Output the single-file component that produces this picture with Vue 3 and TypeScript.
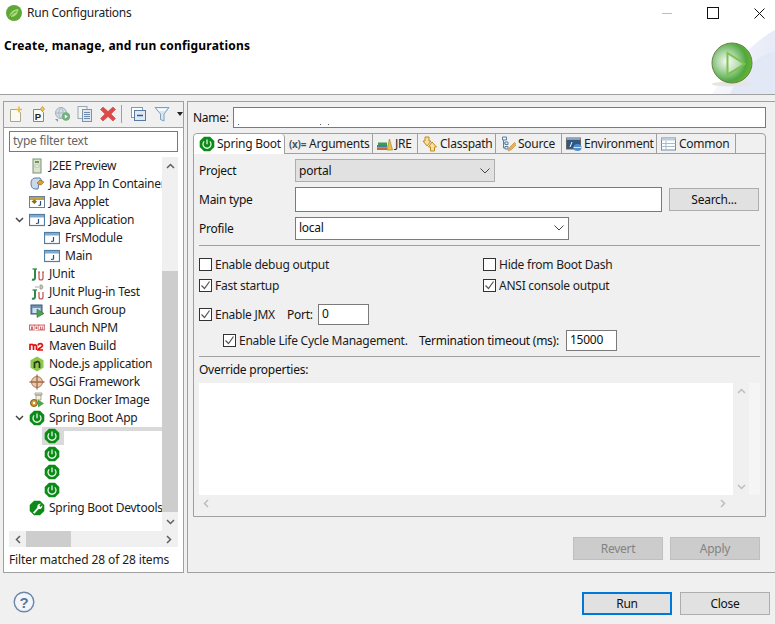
<script setup lang="ts">
const icons: Record<string, string> = {
  spring: '<path d="M5 .7h6L15.3 5v6L11 15.3H5L.7 11V5z" fill="#0b8a17"/><path d="M5.200 5.400a4 4 0 1 0 5.600 0" fill="none" stroke="#e8f5e8" stroke-width="1.300"/><path d="M8 3.600v4.600" stroke="#e8f5e8" stroke-width="1.300"/>',
  wrench: '<path d="M5 .7h6L15.3 5v6L11 15.3H5L.7 11V5z" fill="#0b8a17"/><path d="M4 12.500l4.400-5a3 3 0 0 1 3.600-3.700l-1.700 1.800 1.400 1.300 1.600-1.600a3 3 0 0 1-3.700 3.600l-4.200 4.800z" fill="#fff"/>',
  preview: '<rect x="4" y="1" width="8" height="14" fill="#d8e4cc" stroke="#7f8f7a"/><rect x="6" y="3" width="4" height="2" fill="#6a9a4a"/><rect x="6" y="7" width="4" height="2" fill="#fff" stroke="#999" stroke-width=".5"/>',
  container: '<path d="M6 2h5l2 3-3 2-1 6H6c-3 0-4-3-4-5.500S3 2 6 2z" fill="#c9d8ea" stroke="#5a7ba8"/><path d="M8 7l3-3 4 2-3 3-2-.500z" fill="#e0a030" stroke="#8a6010" stroke-width=".6"/>',
  applet: '<rect x=".5" y="2.500" width="15" height="11" fill="#fff" stroke="#6b7f95"/><rect x="1" y="3" width="14" height="3" fill="#c7a13d"/><path d="M2.500 7.500l3-2 2.500 2-2.500 2.500z" fill="#8f6d1d"/><path d="M11.500 7v4l-2 .5" fill="none" stroke="#2a4f7c" stroke-width="1.200"/>',
  java: '<rect x=".5" y="2.500" width="15" height="11" fill="#fff" stroke="#4f7da6" stroke-width="1.200"/><rect x="1" y="3" width="14" height="2.500" fill="#7fa9cf"/><path d="M9.500 7v4l-2.500.5" fill="none" stroke="#2a4f7c" stroke-width="1.200"/>',
  junit: '<path d="M6 3v9c0 1.500-1.500 2-3 1.500" fill="none" stroke="#2f8a4a" stroke-width="2"/><path d="M3.500 3H8" stroke="#2f8a4a" stroke-width="1.300"/><path d="M10 6v6a2 2 0 0 0 4 0V6M9 6h2M13 6h2" fill="none" stroke="#c0504d" stroke-width="1.200"/>',
  plugin: '<path d="M6 6v7c0 1.500-1.500 2-3 1.500" fill="none" stroke="#2f8a4a" stroke-width="2"/><path d="M3.500 6H8" stroke="#2f8a4a" stroke-width="1.300"/><path d="M10 8v5a2 2 0 0 0 4 0V8" fill="none" stroke="#c0504d" stroke-width="1.200"/><path d="M6 3h4M11 1h2l1 2-1 2h-2z" fill="#e7c66a" stroke="#8797a8" stroke-width=".8"/>',
  group: '<rect x="2" y="3" width="11" height="9" fill="#6f93b7" stroke="#39587a"/><rect x="3.500" y="6" width="8" height="5" fill="#cfe0f0"/><path d="M8 7l7 4.500-7 4z" fill="#4ea24e" stroke="#2b7a2b" stroke-width=".6"/>',
  npm: '<rect y="4.500" width="16" height="6" fill="#cf6d6d"/><path d="M1.500 9.500V6h3v3.500M6 11V6h3v3.500H6M10.500 9.500V6h4.200v3.500M12.600 6v3" fill="none" stroke="#fff" stroke-width=".9"/>',
  maven: '<path d="M1 12V6.500h1.500a1.600 1.600 0 0 1 2 1.500V12M4.500 8a1.600 1.600 0 0 1 3 0v4" fill="none" stroke="#e01010" stroke-width="1.700"/><path d="M9 7.500a2.300 2.300 0 0 1 4.500 0c0 2-4 2.500-4.500 4.500h5" fill="none" stroke="#e01010" stroke-width="1.700"/>',
  node: '<path d="M8 .5l6.500 3.700v7.600L8 15.500l-6.500-3.700V4.200z" fill="#8cc84b"/><path d="M5.500 12V6.500h1.300a2 2 0 0 1 3.700 1V12" fill="none" stroke="#2a3a18" stroke-width="1.700"/>',
  osgi: '<circle cx="8" cy="8" r="5.500" fill="#e8c9a8" stroke="#a87a5a"/><path d="M8 .5v15M.5 8h15" stroke="#a06a4a" stroke-width="1.300"/>',
  docker: '<path d="M6 1h7v2H6zM7 3h5v5H7z" fill="#f4efd8" stroke="#8a8a7a" stroke-width=".7"/><circle cx="5" cy="11" r="3.500" fill="#d69a34" stroke="#7d5a1a"/><circle cx="5" cy="11" r="1.200" fill="#fff"/><path d="M9 7.500l6 4-6 4z" fill="#4da64d"/>',
  new: '<path d="M2.500 3.500h7l3 3v9h-10z" fill="#fbfaf0" stroke="#a8a890"/><path d="M11 .5v6M8 3.500h6" stroke="#e9b93d" stroke-width="1.500"/>',
  proto: '<path d="M2.500 3.500h7l3 3v9h-10z" fill="#fbfaf0" stroke="#88887a"/><text x="3.700" y="14" font-size="9.500" font-weight="700" font-family="Liberation Sans" fill="#222">P</text><path d="M11.500 .5l2 2.500-2 2.500-2-2.500z" fill="#f0d060" stroke="#b08a20" stroke-width=".7"/>',
  export: '<circle cx="7" cy="7" r="5.500" fill="#d5dde6" stroke="#a5b0bc"/><path d="M2 7h10M7 1.500c-3 3-3 8 0 11M7 1.500c3 3 3 8 0 11" fill="none" stroke="#9daab8" stroke-width=".7"/><circle cx="12" cy="10.500" r="4.200" fill="#6fb37a"/><path d="M10.800 8.500l3 2-3 2z" fill="#fff"/><path d="M1 13l3 3v-3z" fill="#7f97b3"/>',
  copy: '<rect x="1" y=".5" width="9" height="12" fill="#f4f4ea" stroke="#9ba7b5"/><rect x="5.500" y="3.500" width="9" height="12" fill="#dfe8f2" stroke="#7b94b0"/><path d="M7 6.500h6M7 8.500h6M7 10.500h6M7 12.500h6" stroke="#6e8cab"/>',
  del: '<path d="M3 1l5 4.500L13 1l2.500 2.500L11 8l4.500 4.500L13 15l-5-4.500L3 15 .5 12.500 5 8 .5 3.500z" fill="#de4a48" stroke="#c53a3a" stroke-width=".5"/>',
  collapse: '<rect x=".5" y="1.500" width="11" height="10" fill="#fff" stroke="#7e9bbb"/><rect x="3.500" y="4.500" width="11" height="10" fill="#dfe9f4" stroke="#557ba3"/><path d="M6 9.500h6" stroke="#2f5d90" stroke-width="1.500"/>',
  filter: '<path d="M1 1.500h14L10 8v7l-3.500-1.500V8z" fill="#d6e6f2" stroke="#80a0b8"/><path d="M3 2.500h10l-2.200 2.500H5z" fill="#f4fafd"/>',
  jre: '<rect x="0" y="9" width="10" height="2.500" fill="#3f7fa8"/><rect x="0" y="11.500" width="10" height="2.500" fill="#c96a32"/><rect x="1" y="6.500" width="9" height="2.500" fill="#3f9a55"/><path d="M10 14l2.500-11 3 11z" fill="#e6c64a" stroke="#a5861d" stroke-width=".7"/>',
  cp: '<path d="M3 1h4v4h2L5 10 1 5h2zM10 6l4.500 5H12.500v4h-4v-4H6.500z" fill="#f8df9e" stroke="#c08a20"/>',
  source: '<path d="M2.500 1h4v3h-4zM5 6h3v2.500H5zM5 10.500h3V13H5zM3.500 4v8H5M3.500 7H5" fill="none" stroke="#5a7fa5"/><path d="M8 15l1.500-3.500 5-5 2 2-5 5z" fill="#f0b050" stroke="#b8862c" stroke-width=".6"/>',
  env: '<rect x=".5" y="2" width="14" height="11" fill="#31577f" stroke="#666"/><rect x=".5" y="2" width="14" height="2" fill="#8aa2bd"/><path d="M4 11l2-5" stroke="#fff"/><ellipse cx="11.500" cy="11.500" rx="4" ry="3.500" fill="#4f8fcf"/><path d="M7.500 11.500h8" stroke="#d0e4f7"/>',
  common: '<rect x=".5" y="2" width="14" height="12" fill="#fff" stroke="#6f8aa7"/><rect x=".5" y="2" width="14" height="2.500" fill="#b9cde0"/><path d="M.5 7.500h14M.5 10.500h14M5 4.500V14" stroke="#a8bccf"/>',
}

interface Row { label?: string; icon: string; level: number; expanded?: boolean; selected?: boolean }
const rows: Row[] = [
  { label: 'J2EE Preview', icon: 'preview', level: 1 },
  { label: 'Java App In Container', icon: 'container', level: 1 },
  { label: 'Java Applet', icon: 'applet', level: 1 },
  { label: 'Java Application', icon: 'java', level: 1, expanded: true },
  { label: 'FrsModule', icon: 'java', level: 2 },
  { label: 'Main', icon: 'java', level: 2 },
  { label: 'JUnit', icon: 'junit', level: 1 },
  { label: 'JUnit Plug-in Test', icon: 'plugin', level: 1 },
  { label: 'Launch Group', icon: 'group', level: 1 },
  { label: 'Launch NPM', icon: 'npm', level: 1 },
  { label: 'Maven Build', icon: 'maven', level: 1 },
  { label: 'Node.js application', icon: 'node', level: 1 },
  { label: 'OSGi Framework', icon: 'osgi', level: 1 },
  { label: 'Run Docker Image', icon: 'docker', level: 1 },
  { label: 'Spring Boot App', icon: 'spring', level: 1, expanded: true },
  { icon: 'spring', level: 2, selected: true },
  { icon: 'spring', level: 2 },
  { icon: 'spring', level: 2 },
  { icon: 'spring', level: 2 },
  { label: 'Spring Boot Devtools Client', icon: 'wrench', level: 1 },
]

const tools = ['new', 'proto', 'export', 'copy', 'del']
const tabs = [
  { label: 'Spring Boot', icon: 'spring', w: 91, active: true },
  { label: 'Arguments', icon: '', w: 88 },
  { label: 'JRE', icon: 'jre', w: 45 },
  { label: 'Classpath', icon: 'cp', w: 78 },
  { label: 'Source', icon: 'source', w: 66 },
  { label: 'Environment', icon: 'env', w: 95 },
  { label: 'Common', icon: 'common', w: 79 },
]
</script>

<template>
  <div class="window">
    <header class="titlebar">
      <svg class="app-icon" width="16" height="16" viewBox="0 0 16 16">
        <circle cx="8" cy="8" r="8" fill="#5fa836" />
        <path d="M3.500 12c0-5 4-7.500 9-8-.5 5-3.500 8-7.500 8z" fill="#a9dc7a" />
        <path d="M4 12.500c1-3 3.500-5 6.500-6" stroke="#4e9a2c" fill="none" />
      </svg>
      <span class="title">Run Configurations</span>
      <div class="win-ctrls">
        <span class="wc"><i class="wc-min"></i></span>
        <span class="wc"><i class="wc-max"></i></span>
        <span class="wc">
          <svg width="11" height="11" viewBox="0 0 11 11"><path d="M.5.500l10 10M10.500.500l-10 10" stroke="#111" /></svg>
        </span>
      </div>
    </header>

    <section class="banner">
      <h1>Create, manage, and run configurations</h1>
      <svg class="banner-art" width="75" height="66" viewBox="0 0 75 66">
        <defs>
          <radialGradient id="ball" cx=".36" cy=".46" r=".62">
            <stop offset="0" stop-color="#f6faf4" />
            <stop offset=".4" stop-color="#a8d4a2" />
            <stop offset=".8" stop-color="#4fa83f" />
            <stop offset="1" stop-color="#62b52e" />
          </radialGradient>
          <linearGradient id="wash" x1="0" y1="0" x2="1" y2="0">
            <stop offset="0" stop-color="#f7f8fd" />
            <stop offset="1" stop-color="#e6ebf7" />
          </linearGradient>
        </defs>
        <path d="M12 66C28 42 52 14 75 2v64z" fill="url(#wash)" />
        <path d="M30 66C42 42 58 26 75 24v42z" fill="#e2e8f6" />
        <ellipse cx="32" cy="56" rx="20" ry="2.500" fill="#e4e6e2" />
        <circle cx="32" cy="35" r="20" fill="url(#ball)" stroke="#6f7f4a" />
        <path d="M27.500 25v21.500l17-10.500z" fill="#ffffff" fill-opacity=".35" stroke="#7cc24c" stroke-width="2" />
      </svg>
    </section>

    <main class="main">
      <aside class="left">
        <div class="toolbar">
          <svg v-for="t in tools" :key="t" class="tool" width="16" height="16" viewBox="0 0 16 16" v-html="icons[t]"></svg>
          <i class="tool-sep"></i>
          <svg class="tool" width="16" height="16" viewBox="0 0 16 16" v-html="icons.collapse"></svg>
          <svg class="tool" width="16" height="16" viewBox="0 0 16 16" v-html="icons.filter"></svg>
          <i class="tool-arrow"></i>
        </div>
        <div class="left-body">
          <div class="filter">type filter text</div>
          <div class="tree-wrap">
            <div class="tree-top">
              <div class="tree">
                <div v-for="(r, i) in rows" :key="i" class="row" :class="'lv' + r.level">
                  <svg v-if="r.expanded" class="twist" width="9" height="6" viewBox="0 0 9 6"><path d="M1 1l3.500 3.500L8 1" fill="none" stroke="#444" stroke-width="1.500" /></svg>
                  <span class="icon-cell" :class="{ sel: r.selected }">
                    <svg width="16" height="16" viewBox="0 0 16 16" v-html="icons[r.icon]"></svg>
                  </span>
                  <span v-if="r.label" class="row-label">{{ r.label }}</span>
                  <span v-else-if="r.selected" class="sel-rest"><i></i></span>
                </div>
              </div>
              <div class="vbar">
                <svg width="9" height="6" viewBox="0 0 9 6"><path d="M1 5l3.500-3.500L8 5" fill="none" stroke="#606060" stroke-width="1.500" /></svg>
                <div class="vtrack"><div class="vthumb"></div></div>
                <svg width="9" height="6" viewBox="0 0 9 6"><path d="M1 1l3.500 3.500L8 1" fill="none" stroke="#606060" stroke-width="1.500" /></svg>
              </div>
            </div>
            <div class="hbar">
              <svg width="6" height="9" viewBox="0 0 6 9"><path d="M5 1L1.500 4.500 5 8" fill="none" stroke="#606060" stroke-width="1.500" /></svg>
              <div class="htrack"><div class="hthumb"></div></div>
              <svg width="6" height="9" viewBox="0 0 6 9"><path d="M1 1l3.500 3.500L1 8" fill="none" stroke="#606060" stroke-width="1.500" /></svg>
            </div>
          </div>
          <div class="status">Filter matched 28 of 28 items</div>
        </div>
      </aside>

      <section class="right">
        <div class="name-row">
          <label>Name:</label>
          <div class="name-input"><i></i><i class="d2"></i><i class="d3"></i></div>
        </div>

        <div class="folder">
          <div class="tabs">
            <div v-for="t in tabs" :key="t.label" class="tab" :class="{ active: t.active }" :style="{ width: t.w + 'px' }">
              <span v-if="!t.icon" class="args">(x)=</span>
              <svg v-else width="16" height="16" viewBox="0 0 16 16" v-html="icons[t.icon]"></svg>
              <span>{{ t.label }}</span>
            </div>
          </div>

          <div class="form">
            <div class="f-row project">
              <label>Project</label>
              <div class="combo ro">
                <span>portal</span>
                <svg width="10" height="6" viewBox="0 0 10 6"><path d="M.5.500L5 5 9.500.500" fill="none" stroke="#444" /></svg>
              </div>
            </div>
            <div class="f-row maintype">
              <label>Main type</label>
              <div class="input grow"></div>
              <button class="btn search">Search...</button>
            </div>
            <div class="f-row profile">
              <label>Profile</label>
              <div class="combo wh">
                <span>local</span>
                <svg width="10" height="6" viewBox="0 0 10 6"><path d="M.5.500L5 5 9.500.500" fill="none" stroke="#444" /></svg>
              </div>
            </div>
            <hr class="sep first" />
            <div class="checks">
              <div class="ck"><i class="box"></i>Enable debug output</div>
              <div class="ck"><i class="box"></i>Hide from Boot Dash</div>
              <div class="ck"><i class="box on"><svg width="11" height="11" viewBox="0 0 11 11"><path d="M1.500 5.500l3 3 5-7" fill="none" stroke="#555" stroke-width="1.200" /></svg></i>Fast startup</div>
              <div class="ck"><i class="box on"><svg width="11" height="11" viewBox="0 0 11 11"><path d="M1.500 5.500l3 3 5-7" fill="none" stroke="#555" stroke-width="1.200" /></svg></i>ANSI console output</div>
            </div>
            <div class="jmx">
              <div class="ck"><i class="box on"><svg width="11" height="11" viewBox="0 0 11 11"><path d="M1.500 5.500l3 3 5-7" fill="none" stroke="#555" stroke-width="1.200" /></svg></i>Enable JMX</div>
              <span class="port-label">Port:</span>
              <div class="input small">0</div>
            </div>
            <div class="life">
              <div class="ck"><i class="box on"><svg width="11" height="11" viewBox="0 0 11 11"><path d="M1.500 5.500l3 3 5-7" fill="none" stroke="#555" stroke-width="1.200" /></svg></i>Enable Life Cycle Management.</div>
              <span class="term-label">Termination timeout (ms):</span>
              <div class="input small">15000</div>
            </div>
            <hr class="sep second" />
            <div class="override-label">Override properties:</div>
            <div class="override">
              <div class="ta-top">
                <div class="ta"></div>
                <div class="ta-v">
                  <svg width="9" height="6" viewBox="0 0 9 6"><path d="M1 5l3.500-3.500L8 5" fill="none" stroke="#bdbdbd" stroke-width="1.500" /></svg>
                  <svg width="9" height="6" viewBox="0 0 9 6"><path d="M1 1l3.500 3.500L8 1" fill="none" stroke="#bdbdbd" stroke-width="1.500" /></svg>
                </div>
                <div class="ta-gap"></div>
              </div>
              <div class="ta-h">
                <svg width="6" height="9" viewBox="0 0 6 9"><path d="M5 1L1.500 4.500 5 8" fill="none" stroke="#bdbdbd" stroke-width="1.500" /></svg>
                <svg width="6" height="9" viewBox="0 0 6 9"><path d="M1 1l3.500 3.500L1 8" fill="none" stroke="#bdbdbd" stroke-width="1.500" /></svg>
              </div>
            </div>
          </div>
        </div>

        <div class="right-actions">
          <button class="btn dis">Revert</button>
          <button class="btn dis">Apply</button>
        </div>
      </section>
    </main>

    <footer class="footer">
      <svg class="help" width="22" height="22" viewBox="0 0 22 22">
        <circle cx="11" cy="11" r="9.800" fill="#f2f5fa" stroke="#6d87a8" stroke-width="1.400" />
        <text x="11" y="16.500" text-anchor="middle" font-size="15" font-weight="700" font-family="Liberation Sans" fill="#5c7697">?</text>
      </svg>
      <div class="foot-btns">
        <button class="btn primary">Run</button>
        <button class="btn">Close</button>
      </div>
    </footer>
  </div>
</template>

<style scoped>
.window {
  width: 775px;
  height: 624px;
  overflow: hidden;
  display: flex;
  flex-direction: column;
  background: #f0f0f0;
  color: #111;
  font-family: "Noto Sans", "Open Sans", sans-serif;
  font-size: 12px;
  line-height: 16px;
  letter-spacing: -0.25px;
}
.titlebar {
  height: 28px;
  flex: none;
  display: flex;
  align-items: center;
  background: #fff;
  padding: 0 0 2px 6px;
  box-sizing: border-box;
}
.app-icon { margin-right: 5px; }
.title { color: #222; }
.win-ctrls { margin-left: auto; margin-right: -7px; display: flex; align-items: center; }
.wc { width: 46px; height: 26px; display: flex; align-items: center; justify-content: center; }
.wc-min { width: 10px; height: 1px; background: #bdbdbd; }
.wc-max { width: 10px; height: 10px; border: 1px solid #111; }
.banner {
  position: relative;
  height: 67px;
  flex: none;
  box-sizing: border-box;
  background: #fff;
  border-bottom: 1px solid #a0a0a0;
  padding: 9px 0 0 4px;
}
.banner h1 { margin: 0; font-size: 12px; line-height: 17px; font-weight: 700; color: #000; letter-spacing: 0.2px; }
.banner-art { position: absolute; right: 0; bottom: 0; }
.main {
  flex: none;
  height: 472px;
  margin-top: 6px;
  padding-left: 3px;
  display: flex;
  gap: 3px;
}
.left {
  width: 181px;
  flex: none;
  box-sizing: border-box;
  border: 1px solid #a0a0a0;
  display: flex;
  flex-direction: column;
}
.toolbar {
  height: 26px;
  flex: none;
  display: flex;
  align-items: center;
  box-sizing: border-box;
  border-bottom: 1px solid #a0a0a0;
  padding: 0 0 2px 4px;
}
.tool { flex: none; margin-right: 7px; }
.tool-sep { width: 1px; height: 18px; background: #a0a0a0; margin: 0 9px 0 -2px; }
.tool-arrow { width: 0; height: 0; border: 3.500px solid transparent; border-top: 4px solid #222; border-bottom: 0; }
.left-body { flex: 1; background: #fff; padding: 3px 5px 0; min-height: 0; display: flex; flex-direction: column; }
.filter {
  height: 21px;
  flex: none;
  box-sizing: border-box;
  border: 1px solid #7a7a7a;
  padding: 1px 3px;
  color: #666;
}
.tree-wrap { margin-top: 5px; flex: none; }
.tree-top { display: flex; height: 374px; }
.tree { width: 153px; flex: none; overflow: hidden; }
.row {
  position: relative;
  height: 18px;
  display: flex;
  align-items: center;
  white-space: nowrap;
  color: #1c1c1c;
}
.lv1 { padding-left: 20px; }
.lv2 { padding-left: 35px; }
.twist { position: absolute; left: 6px; top: 6px; }
.icon-cell { flex: none; width: 16px; height: 16px; margin-right: 4px; }
.lv2 .icon-cell { margin-right: 5px; }
.lv2 .icon-cell.sel {
  background: #d9d9d9;
  height: 18px;
  width: 22px;
  margin: 0 0 0 -2px;
  padding-left: 2px;
  box-sizing: border-box;
  display: flex;
  align-items: center;
}
.sel-rest { flex: 1; height: 18px; background: #fff; }
.sel-rest i { display: block; height: 4px; background: #d9d9d9; }
.row-label { flex: none; }
.vbar {
  width: 16px;
  flex: none;
  background: #f0f0f0;
  display: flex;
  flex-direction: column;
  align-items: center;
  justify-content: space-between;
  padding: 6px 0;
  box-sizing: border-box;
}
.vtrack { flex: 1; width: 100%; position: relative; margin: 6px 0; }
.vthumb { position: absolute; left: 0; right: 0; top: 96px; height: 241px; background: #cdcdcd; }
.hbar {
  height: 16px;
  width: 169px;
  background: #f0f0f0;
  display: flex;
  align-items: center;
  padding: 0 6px;
  box-sizing: border-box;
  gap: 5px;
}
.htrack { flex: 1; height: 16px; position: relative; }
.hthumb { position: absolute; left: 0; width: 45px; top: 0; bottom: 0; background: #cdcdcd; }
.status { margin-top: 5px; color: #1c1c1c; letter-spacing: -0.12px; }
.right {
  flex: 1;
  margin-right: -10px;
  box-sizing: border-box;
  border: 1px solid #a0a0a0;
  padding: 5px 0 0 5px;
  display: flex;
  flex-direction: column;
  min-width: 0;
}
.name-row { display: flex; align-items: center; height: 21px; width: 573px; }
.name-row label { width: 40px; flex: none; }
.name-input {
  position: relative;
  width: 533px;
  height: 21px;
  box-sizing: border-box;
  border: 1px solid #7a7a7a;
  background: #fff;
}
.name-input i { position: absolute; left: 4px; bottom: 2px; width: 1px; height: 1px; background: #3a5a9a; }
.name-input i.d2 { left: 86px; background: #555; }
.name-input i.d3 { left: 94px; background: #555; }
.folder {
  margin-top: 5px;
  width: 573px;
  height: 384px;
  box-sizing: border-box;
  border: 1px solid #a0a0a0;
  border-radius: 4px 4px 0 0;
  display: flex;
  flex-direction: column;
}
.tabs { display: flex; height: 20px; flex: none; box-sizing: border-box; border-bottom: 1px solid #a0a0a0; }
.tab {
  height: 20px;
  box-sizing: border-box;
  flex: none;
  border-right: 1px solid #a0a0a0;
  border-bottom: 1px solid #a0a0a0;
  display: flex;
  align-items: center;
  padding-left: 4px;
  gap: 2px;
  white-space: nowrap;
  color: #1c1c1c;
}
.tab.active { background: #fff; border-bottom: 0; border-radius: 4px 4px 0 0; padding-left: 5px; }
.args { font-size: 10px; font-weight: 700; color: #4a5560; letter-spacing: -.3px; width: 18px; }
.form { padding: 5px 5px 0; display: flex; flex-direction: column; }
.f-row { display: flex; align-items: center; }
.f-row label { width: 96px; flex: none; }
.combo {
  height: 23px;
  box-sizing: border-box;
  display: flex;
  align-items: center;
  justify-content: space-between;
  padding: 0 3px;
}
.combo svg { margin-right: 1px; }
.ro { width: 200px; background: #e1e1e1; border: 1px solid #adadad; }
.wh { width: 274px; background: #fff; border: 1px solid #7a7a7a; padding-bottom: 2px; }
.maintype { margin-top: 5px; }
.profile { margin-top: 5px; }
.input {
  box-sizing: border-box;
  border: 1px solid #7a7a7a;
  background: #fff;
  padding: 1px 3px;
}
.grow { width: 367px; height: 25px; }
.btn {
  width: 90px;
  height: 23px;
  box-sizing: border-box;
  background: #e1e1e1;
  border: 1px solid #adadad;
  border-radius: 0;
  font: inherit;
  letter-spacing: inherit;
  color: #111;
  padding: 0;
}
.search { margin-left: 7px; }
.sep { margin: 0; border: 0; height: 1px; background: #a0a0a0; width: 561px; }
.sep.first { margin-top: 5px; }
.checks {
  display: grid;
  grid-template-columns: 284px 1fr;
  grid-auto-rows: 21px;
  margin-top: 8px;
}
.ck { display: flex; align-items: center; white-space: nowrap; color: #1c1c1c; }
.box {
  width: 13px;
  height: 13px;
  box-sizing: border-box;
  border: 1px solid #333;
  background: #fff;
  margin-right: 3px;
  display: flex;
  align-items: center;
  justify-content: center;
  flex: none;
}
.jmx { display: flex; align-items: center; height: 21px; margin-top: 8px; }
.jmx .ck { width: 88px; flex: none; }
.port-label { width: 31px; flex: none; }
.small { width: 51px; height: 21px; }
.life { display: flex; align-items: center; height: 21px; margin-top: 5px; padding-left: 24px; }
.life .ck { width: 196px; flex: none; }
.term-label { width: 147px; flex: none; white-space: nowrap; }
.sep.second { margin-top: 5px; }
.override-label { margin-top: 5px; height: 16px; margin-bottom: 5px; }
.override { width: 561px; }
.ta-top { display: flex; height: 112px; }
.ta { width: 534px; background: #fff; }
.ta-v {
  width: 16px;
  display: flex;
  flex-direction: column;
  align-items: center;
  justify-content: space-between;
  padding: 5px 0;
  box-sizing: border-box;
}
.ta-gap { width: 11px; background: #f5f5f5; }
.ta-h {
  height: 16px;
  width: 534px;
  display: flex;
  align-items: center;
  justify-content: space-between;
  padding: 0 7px 0 4px;
  box-sizing: border-box;
}
.right-actions { display: flex; gap: 7px; width: 573px; justify-content: flex-end; box-sizing: border-box; padding-right: 6px; margin-top: 20px; }
.dis { background: #cccccc; border-color: #bfbfbf; color: #838383; }
.footer {
  flex: 1;
  display: flex;
  align-items: flex-start;
  justify-content: space-between;
  padding: 19px 5px 0 13px;
}
.help { margin-top: -1px; }
.foot-btns { display: flex; gap: 8px; }
.primary { border: 2px solid #0078d7; }
</style>
